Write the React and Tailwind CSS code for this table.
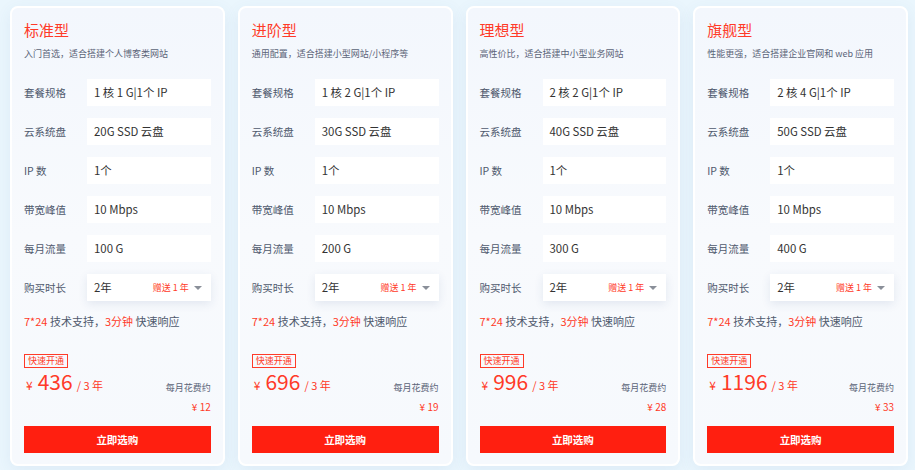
import React from "react";

const plans = [
  { name: "标准型", desc: "入门首选，适合搭建个人博客类网站", spec: "1 核 1 G|1个 IP", disk: "20G SSD 云盘", flow: "100 G", price: "436", month: "12" },
  { name: "进阶型", desc: "通用配置，适合搭建小型网站/小程序等", spec: "1 核 2 G|1个 IP", disk: "30G SSD 云盘", flow: "200 G", price: "696", month: "19" },
  { name: "理想型", desc: "高性价比，适合搭建中小型业务网站", spec: "2 核 2 G|1个 IP", disk: "40G SSD 云盘", flow: "300 G", price: "996", month: "28" },
  { name: "旗舰型", desc: "性能更强，适合搭建企业官网和 web 应用", spec: "2 核 4 G|1个 IP", disk: "50G SSD 云盘", flow: "400 G", price: "1196", month: "33" },
];

function Row({ label, children, select }) {
  return (
    <div className="flex items-center h-[27px]">
      <div className="w-[63px] shrink-0 text-[10.5px] leading-[16px] text-[#4f596d]">{label}</div>
      <div
        className={
          "flex-1 h-full bg-white flex items-center pl-[7px] pr-[9px] text-[11.4px] text-[#333]" +
          (select ? " shadow-[0_3px_10px_rgba(40,70,130,0.10)]" : "")
        }
      >
        {children}
      </div>
    </div>
  );
}

function Card({ p }) {
  return (
    <div className="rounded-[8px] border-2 border-white bg-gradient-to-b from-[#f3f7fd] via-[#f8fafd] to-[#f6f9fd] shadow-[0_4px_16px_rgba(60,100,160,0.08)] px-3 pt-[10px] pb-[11px] flex flex-col">
      <div className="text-[15px] leading-[24px] text-[#ff3a28]">{p.name}</div>
      <div className="mt-[5px] text-[9px] leading-[14px] text-[#5b6478]">{p.desc}</div>
      <div className="mt-[18px] flex flex-col gap-3">
        <Row label="套餐规格">{p.spec}</Row>
        <Row label="云系统盘">{p.disk}</Row>
        <Row label="IP 数">1个</Row>
        <Row label="带宽峰值">10 Mbps</Row>
        <Row label="每月流量">{p.flow}</Row>
        <Row label="购买时长" select>
          <span className="flex-1">2年</span>
          <span className="text-[9px] text-[#ff3a28]">赠送 1 年</span>
          <span className="ml-[5px] w-0 h-0 border-l-[4px] border-r-[4px] border-t-[4px] border-l-transparent border-r-transparent border-t-[#8a8f99]"></span>
        </Row>
      </div>
      <div className="mt-[11px] text-[11px] leading-[18px] text-[#4f596d]">
        <span className="text-[#ff3a28]">7*24</span> 技术支持，<span className="text-[#ff3a28]">3分钟</span> 快速响应
      </div>
      <div className="mt-[24px] self-start h-[14px] px-[3px] border border-[#ff3a28] text-[#ff3a28] text-[9px] leading-[10px] flex items-center">
        快速开通
      </div>
      <div className="mt-[2px] h-[26px] flex justify-between items-end">
        <div className="flex items-baseline text-[#ff3a28] leading-[22px]">
          <span className="text-[12px] ml-[2px] mr-[5px]">¥</span>
          <span className="text-[21px]">{p.price}</span>
          <span className="text-[11px] ml-[4px]">/ 3 年</span>
        </div>
        <div className="text-[9px] leading-[14px] text-[#5b6478] mb-[1px]">每月花费约</div>
      </div>
      <div className="mt-[4px] text-right text-[10px] leading-[14px] text-[#ff3a28]">¥ {p.month}</div>
      <button className="mt-[12px] h-[27px] w-full bg-[#ff1f10] text-white text-[10.5px] font-bold flex items-center justify-center">
        立即选购
      </button>
    </div>
  );
}

export default function App() {
  return (
    <div
      className="w-[915px] h-[470px] bg-[#eaf6fd] pl-[10px] pr-[7px] pt-[6px] grid grid-cols-4 gap-[13px] items-start"
      style={{ fontFamily: '"Noto Sans CJK SC", "Noto Sans", sans-serif' }}
    >
      {plans.map((p) => (
        <Card key={p.name} p={p} />
      ))}
    </div>
  );
}
